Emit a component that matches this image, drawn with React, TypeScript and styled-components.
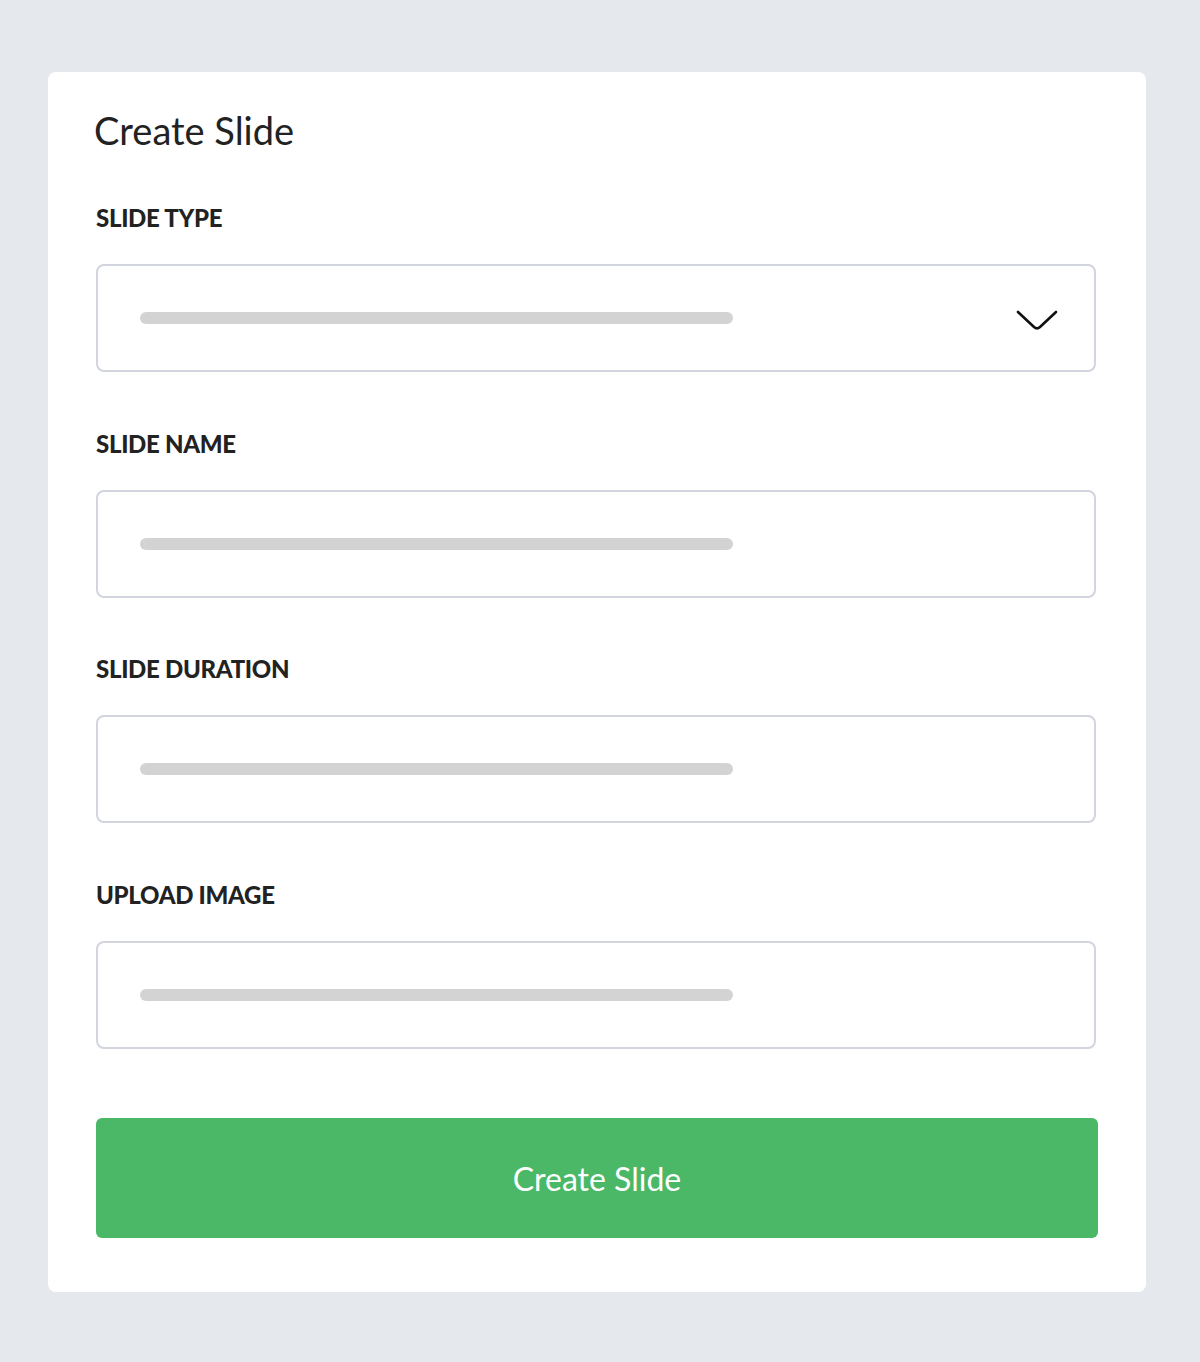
import React from "react";
import styled, { createGlobalStyle } from "styled-components";

const GlobalStyle = createGlobalStyle`
  html, body {
    margin: 0;
    padding: 0;
    background: #e5e8ed;
    font-family: Lato, "Open Sans", sans-serif;
  }
`;

const Page = styled.div`
  min-height: 1362px;
  padding: 72px 54px 70px 48px;
  box-sizing: border-box;
`;

const Card = styled.div`
  background: #ffffff;
  border-radius: 8px;
  padding: 30px 48px 54px 48px;
  box-sizing: border-box;
  width: 1098px;
`;

const Title = styled.h1`
  margin: 0 0 44px -2px;
  font-size: 38px;
  font-weight: 400;
  color: #222222;
  line-height: 56px;
`;

const Field = styled.div`
  display: flex;
  flex-direction: column;
  margin-bottom: 55.5px;
`;

const Label = styled.label`
  font-size: 24px;
  font-weight: 900;
  color: #222222;
  line-height: 32px;
  margin-bottom: 30px;
  letter-spacing: -0.3px;
`;

const InputBox = styled.div`
  height: 108px;
  width: 1000px;
  border: 2px solid #d3d5de;
  border-radius: 8px;
  box-sizing: border-box;
  display: flex;
  align-items: center;
  justify-content: space-between;
  padding: 0 36px 0 42px;
`;

const Placeholder = styled.div`
  width: 593px;
  height: 12px;
  border-radius: 6px;
  background: #d3d3d3;
`;

const Chevron = styled.svg`
  width: 42px;
  height: 24px;
  margin-top: 6px;
  flex-shrink: 0;
`;

const SubmitButton = styled.button`
  margin-top: 14px;
  width: 1002px;
  height: 120px;
  border: none;
  border-radius: 6px;
  background: #4ab866;
  color: #ffffff;
  font-family: Lato, "Open Sans", sans-serif;
  font-size: 32px;
  font-weight: 400;
  cursor: pointer;
`;

type FormFieldProps = {
  label: string;
  select?: boolean;
};

const FormField: React.FC<FormFieldProps> = ({ label, select }) => (
  <Field>
    <Label>{label}</Label>
    <InputBox>
      <Placeholder />
      {select && (
        <Chevron viewBox="0 0 42 24" fill="none">
          <path
            d="M2 3 L18 18 Q21 20.8 24 18 L40 3"
            stroke="#111"
            strokeWidth="2.6"
            strokeLinecap="round"
            strokeLinejoin="round"
          />
        </Chevron>
      )}
    </InputBox>
  </Field>
);

const App: React.FC = () => {
  return (
    <>
      <GlobalStyle />
      <Page>
        <Card>
          <Title>Create Slide</Title>
          <FormField label="SLIDE TYPE" select />
          <FormField label="SLIDE NAME" />
          <FormField label="SLIDE DURATION" />
          <FormField label="UPLOAD IMAGE" />
          <SubmitButton>Create Slide</SubmitButton>
        </Card>
      </Page>
    </>
  );
};

export default App;
